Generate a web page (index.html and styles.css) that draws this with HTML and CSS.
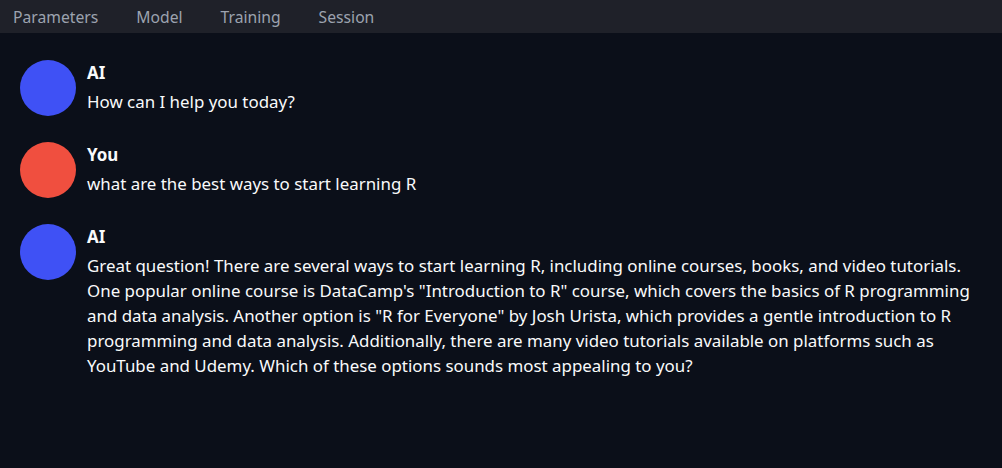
FILE: index.html
```html
<!DOCTYPE html>
<html lang="en">
<head>
<meta charset="utf-8">
<title>Chat</title>
<link rel="stylesheet" href="styles.css">
</head>
<body>
<nav class="tabs">
  <span class="tab">Parameters</span>
  <span class="tab">Model</span>
  <span class="tab">Training</span>
  <span class="tab">Session</span>
</nav>
<main class="chat">
  <div class="msg">
    <div class="avatar ai"></div>
    <div class="body">
      <div class="name">AI</div>
      <div class="text">How can I help you today?</div>
    </div>
  </div>
  <div class="msg">
    <div class="avatar you"></div>
    <div class="body">
      <div class="name">You</div>
      <div class="text">what are the best ways to start learning R</div>
    </div>
  </div>
  <div class="msg">
    <div class="avatar ai"></div>
    <div class="body">
      <div class="name">AI</div>
      <div class="text">Great question! There are several ways to start learning R, including online courses, books, and video tutorials. One popular online course is DataCamp's "Introduction to R" course, which covers the basics of R programming and data analysis. Another option is "R for Everyone" by Josh Urista, which provides a gentle introduction to R programming and data analysis. Additionally, there are many video tutorials available on platforms such as YouTube and Udemy. Which of these options sounds most appealing to you?</div>
    </div>
  </div>
</main>
</body>
</html>
```

FILE: styles.css
```css
html, body {
  margin: 0;
  padding: 0;
  background: #0b0f19;
  font-family: "Noto Sans", "Open Sans", sans-serif;
  color: #f9fafb;
  height: 100%;
}
.tabs {
  display: flex;
  gap: 38px;
  height: 33px;
  align-items: center;
  padding-left: 13px;
  background: #1f2129;
  box-sizing: border-box;
}
.tab {
  font-size: 15.7px;
  color: #9ca3af;
  line-height: 20px;
}
.chat {
  display: flex;
  flex-direction: column;
  gap: 26px;
  padding: 27px 15px 0 20px;
}
.msg {
  display: flex;
  gap: 11px;
  align-items: flex-start;
}
.avatar {
  flex: 0 0 56px;
  width: 56px;
  height: 56px;
  border-radius: 50%;
}
.avatar.ai { background: #3f51f5; }
.avatar.you { background: #f04f3f; }
.body {
  padding-top: 1px;
}
.name {
  font-weight: 700;
  font-size: 16.9px;
  line-height: 24px;
  margin-bottom: 4px;
}
.text {
  font-size: 16.9px;
  line-height: 25px;
}
```
